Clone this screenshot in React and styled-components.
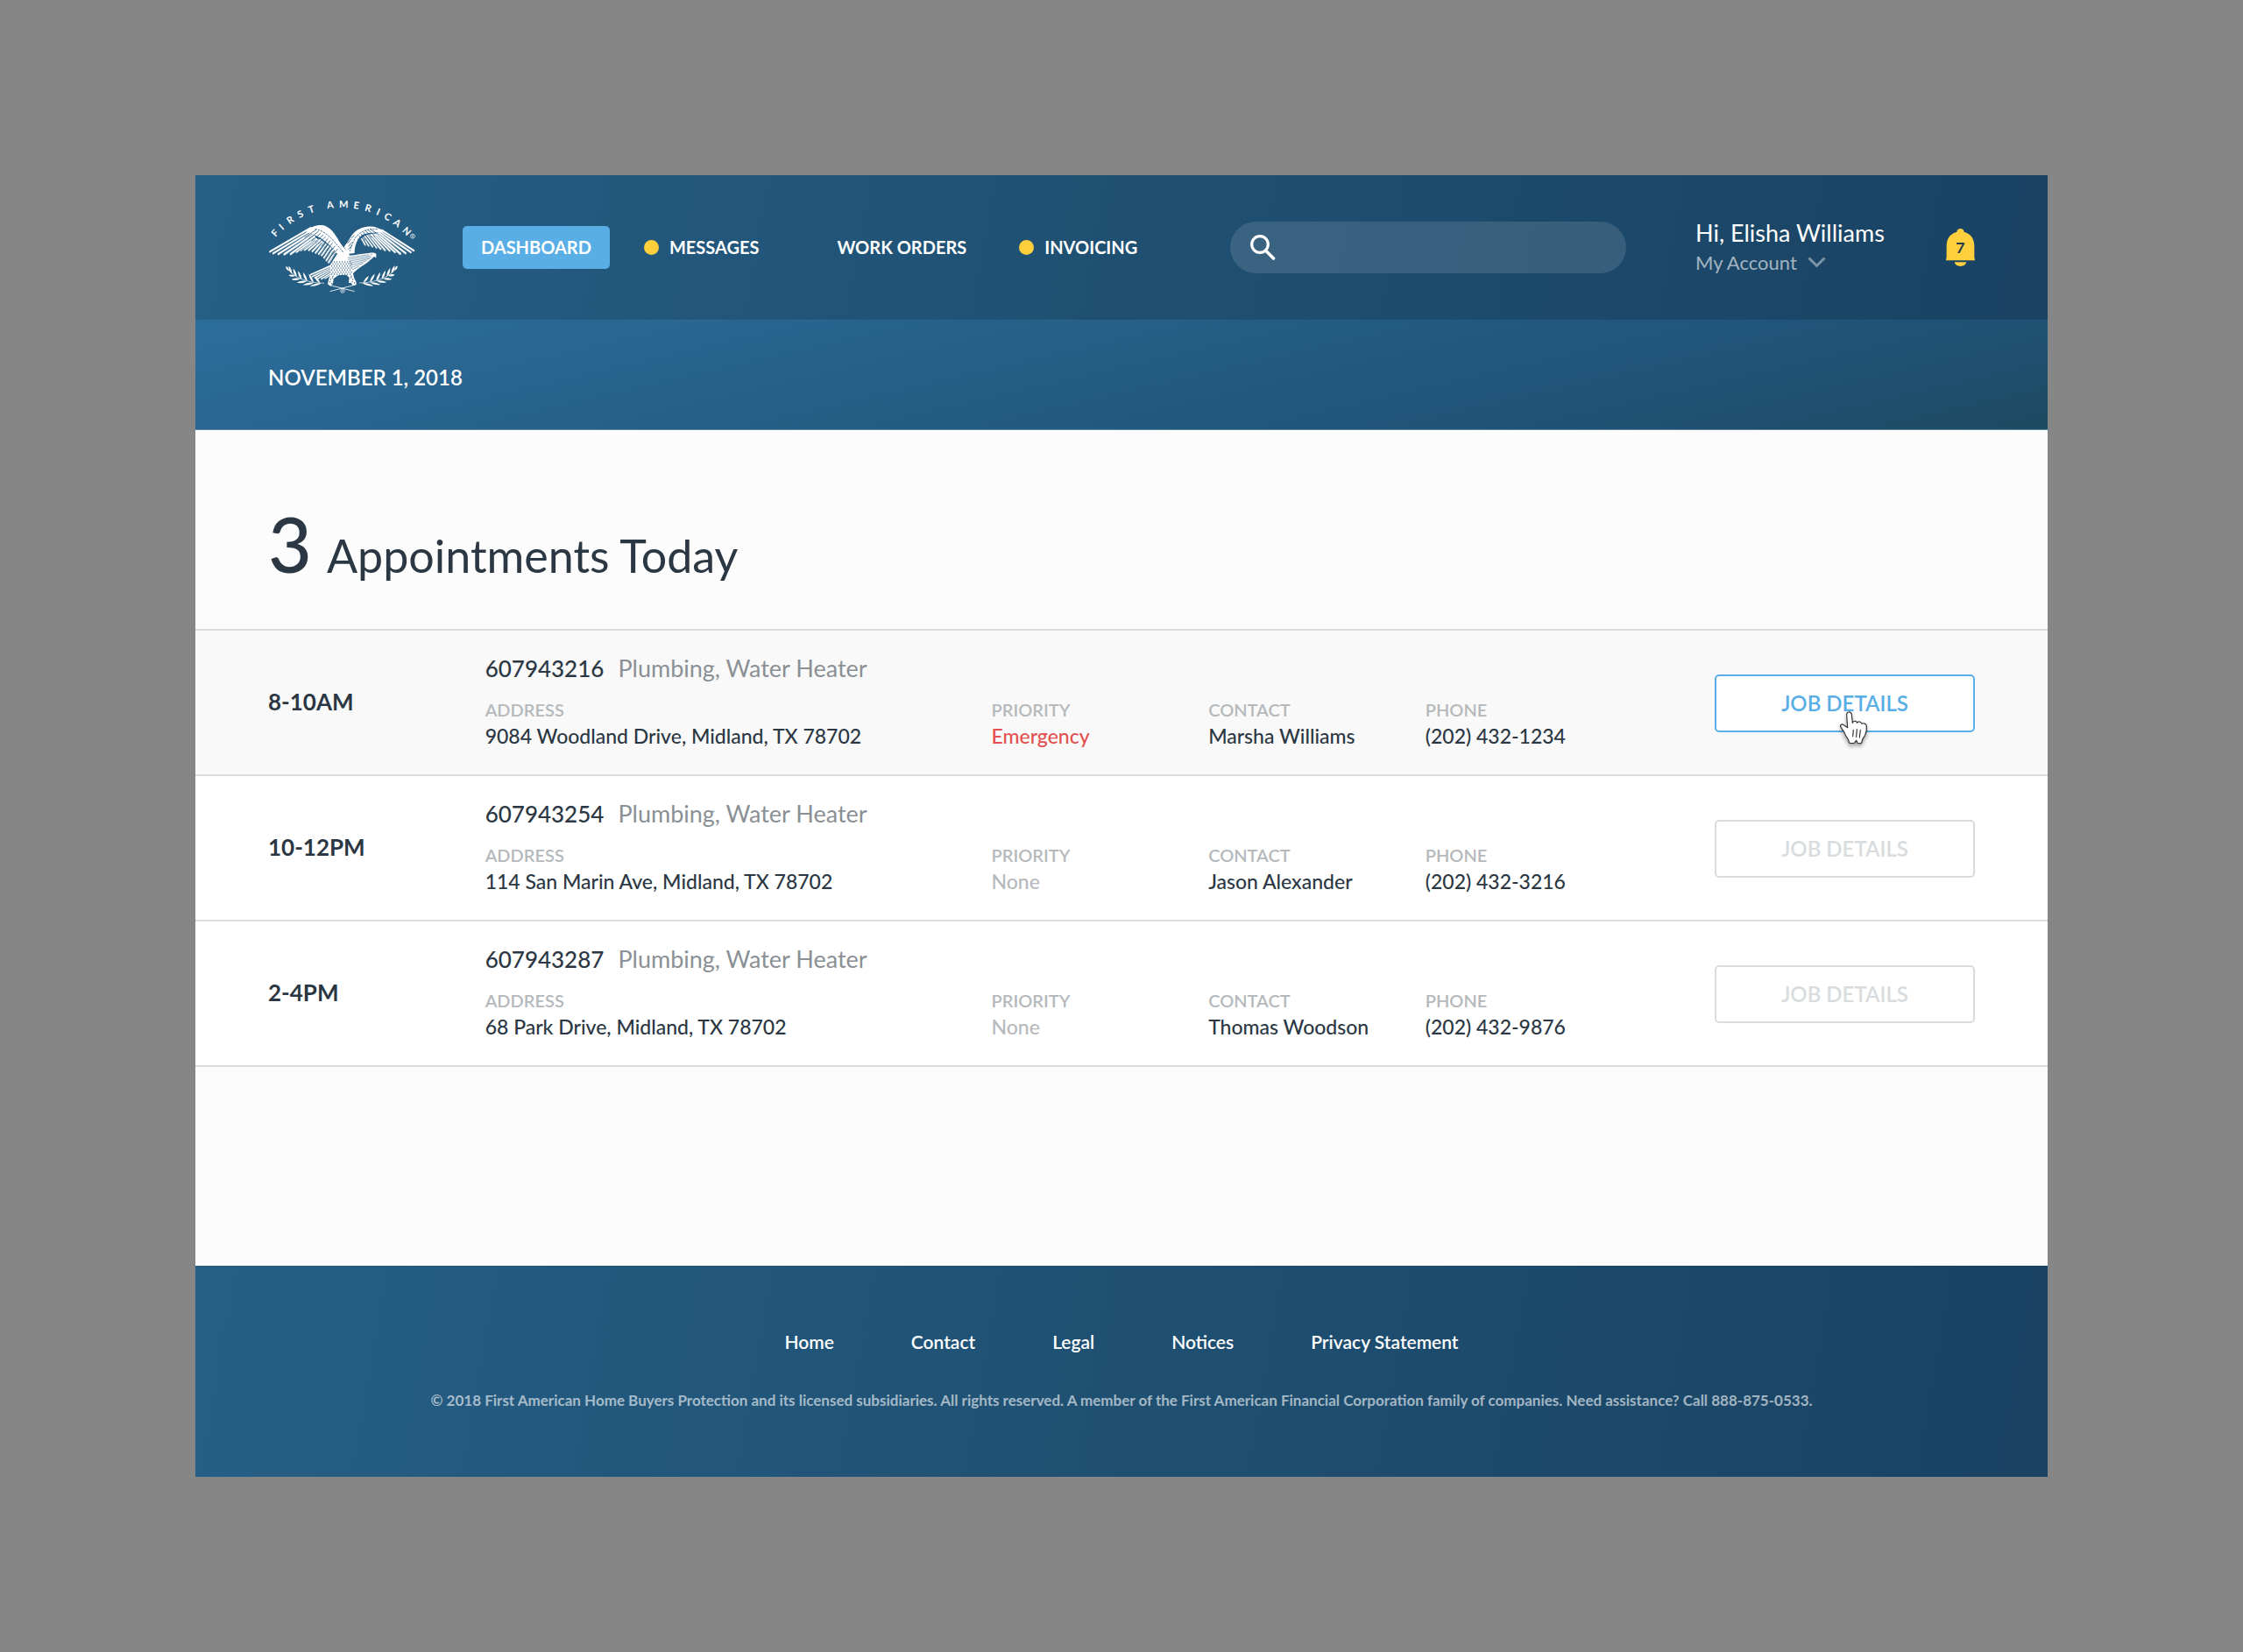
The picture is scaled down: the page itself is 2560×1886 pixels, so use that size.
import React from "react";
import styled, { createGlobalStyle } from "styled-components";

const ink = "#2b3743";
const sky = "#59aee6";
const sun = "#ffcf3c";
const line = "#dadcde";
const deepBlue = "linear-gradient(100deg, #265f86 0%, #1f5072 50%, #194263 100%)";

const GlobalStyle = createGlobalStyle`
  * { box-sizing: border-box; }
  body {
    margin: 0;
    background: #868686;
    color: ${ink};
    font-family: Lato, "Open Sans", sans-serif;
    font-size: 23px;
  }
  h1, p, ul, dl, dd { margin: 0; padding: 0; }
  ul { list-style: none; }
  a { color: inherit; text-decoration: none; }
  button, input { font: inherit; color: inherit; }
`;

const Page = styled.div`
  min-height: 100vh;
  padding: 200px 223px;
`;

const Window = styled.div`
  background: #fcfcfc;
`;

const Header = styled.header`
  display: flex;
  align-items: center;
  min-height: 165px;
  padding: 0 83px;
  background: ${deepBlue};
  color: #fff;
`;

const LogoLink = styled.a`
  display: flex;
  flex: none;
  margin-right: 54px;
`;

const LogoArt = styled.svg`
  overflow: visible;
`;

const Nav = styled.nav`
  display: flex;
  flex: 1;
  gap: 18px;
`;

const NavLink = styled.a`
  display: flex;
  align-items: center;
  gap: 12px;
  padding: 0 21px;
  border-radius: 5px;
  background: ${(p) => (p.$active ? sky : "transparent")};
  font-size: 20px;
  font-weight: 700;
  line-height: 49px;
  white-space: nowrap;
`;

const Dot = styled.span`
  width: 17px;
  height: 17px;
  border-radius: 50%;
  background: ${(p) => (p.$on ? sun : "transparent")};
`;

const Search = styled.label`
  display: flex;
  align-items: center;
  gap: 16px;
  flex: 0 1 452px;
  height: 59px;
  margin-right: 79px;
  padding: 0 23px;
  border-radius: 30px;
  background: rgba(255, 255, 255, 0.12);
`;

const SearchInput = styled.input`
  flex: 1;
  min-width: 0;
  border: 0;
  outline: 0;
  background: transparent;
`;

const Account = styled.div`
  flex: none;
  min-width: 286px;
`;

const Greeting = styled.p`
  font-size: 27px;
  line-height: 34px;
`;

const AccountButton = styled.button`
  display: flex;
  align-items: center;
  gap: 12px;
  padding: 0;
  border: 0;
  background: none;
  color: rgba(255, 255, 255, 0.6);
  font-size: 22px;
  line-height: 34px;
`;

const BellButton = styled.button`
  display: flex;
  padding: 0;
  border: 0;
  background: none;
`;

const DateBar = styled.div`
  padding: 52px 83px 45px;
  border-bottom: 1px solid #5585a6;
  background: linear-gradient(167deg, #2c6e9b 0%, #265f87 40%, #21567d 65%, #1f5071 84%, #1e4a60 100%);
  color: #fff;
  font-size: 24px;
  font-weight: 600;
  line-height: 28px;
`;

const Title = styled.h1`
  display: flex;
  align-items: baseline;
  gap: 17px;
  padding: 86px 83px 40px;
  font-size: 52px;
  font-weight: 400;
  line-height: 88px;
`;

const Count = styled.span`
  font-size: 86px;
  font-weight: 500;
`;

const Main = styled.main`
  padding-bottom: 227px;
`;

const JobList = styled.ul`
  border-top: 2px solid ${line};
`;

const JobRow = styled.li`
  display: grid;
  grid-template-columns: 3fr 17fr 297px;
  align-items: center;
  padding: 27px 83px 26px;
  border-bottom: 2px solid ${line};
  background: ${(p) => (p.$active ? "#f9f9f9" : "#fff")};
`;

const Time = styled.time`
  padding-bottom: 4px;
  font-size: 26px;
  font-weight: 700;
  line-height: 32px;
`;

const JobTitle = styled.p`
  display: flex;
  align-items: baseline;
  gap: 16px;
  margin-bottom: 19px;
  font-size: 27px;
  line-height: 32px;
`;

const JobNumber = styled.span`
  font-size: 26px;
  font-weight: 500;
`;

const JobType = styled.span`
  color: #8a9095;
`;

const Facts = styled.dl`
  display: grid;
  grid-template-columns: 7fr 3fr 3fr 4fr;
`;

const Label = styled.dt`
  color: #b5b9bc;
  font-size: 20px;
  font-weight: 600;
  line-height: 24px;
`;

const tones = { normal: ink, urgent: "#e4504f", muted: "#b5b9bc" };

const Value = styled.dd`
  color: ${(p) => tones[p.$tone || "normal"]};
  font-size: 23px;
  font-weight: 500;
  line-height: 36px;
`;

const ButtonSlot = styled.div`
  position: relative;
`;

const DetailsButton = styled.button`
  display: block;
  width: 100%;
  height: 66px;
  padding: 0;
  border: 2px solid ${(p) => (p.$active ? sky : "#d8dcde")};
  border-radius: 5px;
  background: #fff;
  color: ${(p) => (p.$active ? sky : "#d8dcde")};
  font-size: 24px;
  font-weight: 600;
`;

const Pointer = styled.svg`
  position: absolute;
  left: 142px;
  top: 41px;
  pointer-events: none;
  filter: drop-shadow(0 3px 2px rgba(0, 0, 0, 0.35));
`;

const Footer = styled.footer`
  padding: 75px 83px 75px;
  background: ${deepBlue};
  color: #fff;
  text-align: center;
`;

const FooterLinks = styled.nav`
  display: flex;
  justify-content: center;
  gap: 88px;
  margin-bottom: 43px;
  font-size: 21px;
  font-weight: 600;
  line-height: 24px;
`;

const Legal = styled.p`
  color: rgba(255, 255, 255, 0.6);
  font-size: 17px;
  font-weight: 700;
  line-height: 24px;
`;

/* Wordmark: each letter sits on a circle, turned to face outwards. */
const arc = [
  ["F", -46.8, 0.54], ["I", -41.2, 0.27], ["R", -34.3, 0.6], ["S", -26.9, 0.54], ["T", -19.5, 0.57],
  [" ", -13, 0.2],
  ["A", -7.3, 0.67], ["M", 1.1, 0.9], ["E", 9.2, 0.56], ["R", 16.7, 0.6], ["I", 23.5, 0.27],
  ["C", 30.2, 0.64], ["A", 37.2, 0.67], ["N", 45.2, 0.73],
].map(([ch, deg, w]) => {
  const a = (deg * Math.PI) / 180;
  const half = (w * 33) / 2;
  return {
    ch,
    deg,
    x: 302 + 302 * Math.sin(a) - half * Math.cos(a),
    y: 366 - 302 * Math.cos(a) - half * Math.sin(a),
  };
});

/* Feathers as [base x, base y, tip x, tip y, width]. */
const leftFeathers = [
  [196, 134, 57, 215, 6], [198, 142, 68, 221, 6], [202, 149, 86, 223, 7], [204, 157, 106, 224, 7],
  [208, 164, 128, 223, 7], [212, 170, 148, 216, 6], [216, 173, 162, 210, 6], [222, 174, 176, 209, 6],
  [228, 176, 190, 210, 6], [234, 180, 202, 214, 6], [240, 185, 213, 219, 6], [248, 191, 224, 223, 6],
  [256, 197, 234, 228, 6], [264, 203, 242, 236, 6], [272, 210, 250, 245, 6], [280, 216, 258, 252, 6],
  [290, 224, 268, 258, 6], [300, 232, 280, 262, 6],
];
const leftCoverts = [
  [214, 140, 176, 166], [222, 146, 188, 172], [230, 152, 200, 178], [238, 158, 212, 182], [246, 164, 222, 188],
  [254, 171, 232, 196], [262, 178, 242, 203], [270, 186, 250, 211], [279, 196, 259, 219], [288, 206, 268, 228],
];
const rightFeathers = [
  [440, 142, 548, 211, 6], [436, 147, 538, 217, 6], [430, 151, 520, 220, 7], [424, 154, 502, 222, 7],
  [417, 156, 484, 217, 6], [410, 156, 466, 212, 6], [403, 157, 450, 210, 6], [396, 158, 435, 206, 5],
  [389, 160, 421, 202, 5], [382, 163, 407, 198, 5], [376, 167, 394, 195, 5], [370, 172, 382, 192, 5],
];
const rightCoverts = [
  [400, 138, 428, 156], [392, 140, 416, 162], [384, 143, 404, 166], [376, 148, 392, 170], [369, 155, 382, 176],
  [363, 163, 372, 184], [358, 172, 364, 194], [354, 182, 358, 204],
];
const tail = [
  [268, 262, 196, 294], [266, 268, 202, 300], [266, 274, 211, 304], [266, 280, 221, 307], [268, 286, 233, 308], [270, 290, 246, 306],
];
const neckLines = [
  [322, 236, 396, 225], [324, 242, 402, 229], [326, 248, 404, 234], [328, 255, 398, 239], [331, 262, 388, 246], [334, 269, 376, 254], [338, 276, 362, 265],
];

/* Laurel leaves of the left branch as [x, y, angle, length]; the right branch mirrors them. */
const leaves = [
  [121, 280, -122, 18], [132, 291, -112, 30], [148, 302, -112, 32], [165, 311, -112, 33], [184, 317, -114, 34],
  [206, 321, -120, 34], [228, 323, -128, 30],
  [142, 298, 188, 22], [160, 308, 176, 30], [182, 316, 172, 34], [206, 321, 168, 38], [232, 323, 166, 40],
];

function Leaf({ x, y, angle, length }) {
  const l = length;
  return (
    <path
      d={`M0 0C${l * 0.3} -5.5 ${l * 0.7} -5 ${l} 0C${l * 0.7} 4 ${l * 0.3} 4.5 0 0Z`}
      transform={`translate(${x} ${y}) rotate(${angle})`}
    />
  );
}

function Branch() {
  return (
    <>
      <path d="M112 268C136 302 180 322 242 323" fill="none" stroke="#fff" strokeWidth="2" />
      {leaves.map(([x, y, angle, length], i) => (
        <Leaf key={i} x={x} y={y} angle={angle} length={length} />
      ))}
    </>
  );
}

const blue = "#265b80";
const speckles = [[264, 310], [270, 304], [262, 318], [268, 324], [334, 304], [340, 310], [338, 318], [346, 322]];
for (let r = 0; r < 8; r++) {
  for (let c = 0; c < 9; c++) {
    const x = 268 + c * 9 + (r % 2) * 4;
    const y = 250 + r * 7;
    if (x < 340 - (y - 250) * 0.1 && (y < 296 || x < 274 || x > 328)) speckles.push([x, y]);
  }
}

function Logo() {
  return (
    <LogoArt width="168" height="108" viewBox="50 40 504 324" fill="#fff" role="img" aria-label="First American">
      <text
        x={arc.map((g) => g.x).join(" ")}
        y={arc.map((g) => g.y).join(" ")}
        rotate={arc.map((g) => g.deg).join(" ")}
        fontSize="33"
        fontWeight="700"
      >
        FIRST AMERICAN
      </text>
      <g fill="none" stroke="#fff" strokeWidth="2">
        <circle cx="545" cy="162" r="7.5" />
        <path d="M543 167V158h3a2 2 0 0 1 0 5h-3M545.500 163l3 4" strokeWidth="1.500" />
        <circle cx="305" cy="349" r="7" />
        <path d="M303 353V345h3a2 2 0 0 1 0 4h-3M305.500 349l3 4" strokeWidth="1.500" />
        <path d="M262 351L346 329M259 329L346 351" strokeWidth="2.500" />
      </g>

      <g stroke="#fff" strokeLinecap="round">
        {[...leftFeathers, ...rightFeathers].map(([x1, y1, x2, y2, w], i) => (
          <line key={i} x1={x1} y1={y1} x2={x2} y2={y2} strokeWidth={w + 1} />
        ))}
      </g>
      <g stroke={blue} strokeWidth="1.600">
        {[...leftFeathers, ...rightFeathers].map(([x1, y1, x2, y2], i) => (
          <line key={i} x1={x1} y1={y1 + 4} x2={x2} y2={y2 + 4} />
        ))}
      </g>

      <path d="M180 146C196 130 214 123 234 124C258 127 274 146 288 170C300 192 312 206 326 216L332 244L300 240C282 214 256 184 226 166C206 156 190 152 180 146Z" />
      <path d="M448 146C430 132 410 127 390 129C364 132 344 144 332 166C324 180 314 192 310 200L328 222L346 220C346 196 354 172 372 158C392 148 424 152 448 146Z" />
      <g stroke={blue} strokeWidth="2.400" fill="none" strokeLinecap="round">
        {[...leftCoverts, ...rightCoverts].map(([x1, y1, x2, y2], i) => (
          <line key={i} x1={x1} y1={y1} x2={x2} y2={y2} />
        ))}
        <path d="M212 138C246 142 274 176 306 216" strokeDasharray="5 5" />
        <path d="M424 138C386 134 356 150 344 176C338 190 334 200 330 212" strokeDasharray="5 5" />
        <path d="M334 172l-12 14M338 182l-12 14M336 194l-10 12M344 160l-8 8" />
      </g>

      <g stroke="#fff" strokeWidth="6" strokeLinecap="round">
        {tail.map(([x1, y1, x2, y2], i) => (
          <line key={i} x1={x1} y1={y1} x2={x2} y2={y2} />
        ))}
      </g>
      <g stroke={blue} strokeWidth="1.800">
        {tail.map(([x1, y1, x2, y2], i) => (
          <line key={i} x1={x1} y1={y1 + 4} x2={x2} y2={y2 + 4} />
        ))}
      </g>

      <path d="M300 222C320 232 340 228 362 224L398 219C408 217 416 219 420 222L420 236L413 232C400 244 384 258 366 268C354 276 346 284 341 290L344 304L352 320L352 329L340 331L334 322L326 322L328 304L318 294L290 296L274 308L272 324L264 333L254 326L258 308L266 290L262 264C270 246 284 230 300 222Z" />
      <g stroke={blue} strokeWidth="1.600">
        {neckLines.map(([x1, y1, x2, y2], i) => (
          <line key={i} x1={x1} y1={y1} x2={x2} y2={y2} />
        ))}
      </g>
      <g fill={blue}>
        {speckles.map(([x, y], i) => (
          <ellipse key={i} cx={x} cy={y} rx="2" ry="2.300" />
        ))}
        <circle cx="404" cy="224" r="1.800" />
      </g>

      <Branch />
      <g transform="matrix(-1 0 0 1 604 -1)">
        <Branch />
      </g>
    </LogoArt>
  );
}

function SearchIcon() {
  return (
    <svg width="29" height="29" viewBox="0 0 29 29" fill="none" stroke="#fff" aria-hidden="true">
      <circle cx="11" cy="11" r="9.300" strokeWidth="3.200" />
      <path d="M19 19.500L26.500 27" strokeWidth="3.600" strokeLinecap="round" />
    </svg>
  );
}

function Chevron() {
  return (
    <svg width="21" height="13" viewBox="0 0 21 13" fill="none" stroke="currentColor" strokeWidth="3" opacity="0.700" aria-hidden="true">
      <path d="M1.500 1.500L10.500 10.500L19.500 1.500" />
    </svg>
  );
}

function Bell() {
  return (
    <svg width="33" height="43" viewBox="0 0 99 129" fill={sun} aria-hidden="true">
      <path d="M49.500 0C56 0 61 4 62 11C84 17 97 34 97 58V96C97 102 99 103 99 109H0C0 103 2 102 2 96V58C2 34 15 17 37 11C38 4 43 0 49.500 0Z" />
      <path d="M29 115H70C68 124 60 129 49.500 129C39 129 31 124 29 115Z" />
      <text x="49" y="85" textAnchor="middle" fontSize="53" fontWeight="700" fill="#23394b">7</text>
    </svg>
  );
}

function HandPointer() {
  return (
    <Pointer width="33" height="39" viewBox="-3 -3 99 117" fill="#fff" stroke="#333" strokeWidth="3.500" strokeLinejoin="round" strokeLinecap="round" aria-hidden="true">
      <path d="M26 56L23 12C22 0 38 0 40 11L43 40C45 32 56 31 59 40C62 33 73 35 75 43C80 39 90 43 91 50C92 62 91 72 86 82C79 91 75 98 74 108C70 111 62 111 60 108L56 100L51 107C46 110 36 110 31 107C32 98 24 92 20 84C16 73 10 64 4 56C-3 47 6 42 13 47C18 50 22 53 26 56Z" />
      <path d="M46 64L44 86M58 62L56 88M70 64L67 90" />
    </Pointer>
  );
}

const navItems = [
  { label: "DASHBOARD", active: true },
  { label: "MESSAGES", unread: true },
  { label: "WORK ORDERS" },
  { label: "INVOICING", unread: true },
];

const jobs = [
  { time: "8-10AM", number: "607943216", address: "9084 Woodland Drive, Midland, TX 78702", priority: "Emergency", tone: "urgent", contact: "Marsha Williams", phone: "(202) 432-1234", active: true },
  { time: "10-12PM", number: "607943254", address: "114 San Marin Ave, Midland, TX 78702", priority: "None", tone: "muted", contact: "Jason Alexander", phone: "(202) 432-3216" },
  { time: "2-4PM", number: "607943287", address: "68 Park Drive, Midland, TX 78702", priority: "None", tone: "muted", contact: "Thomas Woodson", phone: "(202) 432-9876" },
];

const footerLinks = ["Home", "Contact", "Legal", "Notices", "Privacy Statement"];

function Fact({ label, tone, children }) {
  return (
    <div>
      <Label>{label}</Label>
      <Value $tone={tone}>{children}</Value>
    </div>
  );
}

function Job({ job }) {
  return (
    <JobRow $active={job.active}>
      <Time>{job.time}</Time>
      <div>
        <JobTitle>
          <JobNumber>{job.number}</JobNumber>
          <JobType>Plumbing, Water Heater</JobType>
        </JobTitle>
        <Facts>
          <Fact label="ADDRESS">{job.address}</Fact>
          <Fact label="PRIORITY" tone={job.tone}>{job.priority}</Fact>
          <Fact label="CONTACT">{job.contact}</Fact>
          <Fact label="PHONE">{job.phone}</Fact>
        </Facts>
      </div>
      <ButtonSlot>
        <DetailsButton type="button" $active={job.active}>JOB DETAILS</DetailsButton>
        {job.active && <HandPointer />}
      </ButtonSlot>
    </JobRow>
  );
}

export default function App() {
  return (
    <>
      <GlobalStyle />
      <Page>
        <Window>
          <Header>
            <LogoLink href="#home"><Logo /></LogoLink>
            <Nav aria-label="Main">
              {navItems.map((item) => (
                <NavLink key={item.label} href="#" $active={item.active}>
                  {!item.active && <Dot $on={item.unread} />}
                  {item.label}
                </NavLink>
              ))}
            </Nav>
            <Search>
              <SearchIcon />
              <SearchInput type="search" aria-label="Search" />
            </Search>
            <Account>
              <Greeting>Hi, Elisha Williams</Greeting>
              <AccountButton type="button">My Account <Chevron /></AccountButton>
            </Account>
            <BellButton type="button" aria-label="Notifications"><Bell /></BellButton>
          </Header>
          <DateBar>NOVEMBER 1, 2018</DateBar>
          <Main>
            <Title><Count>3</Count> Appointments Today</Title>
            <JobList>
              {jobs.map((job) => <Job key={job.number} job={job} />)}
            </JobList>
          </Main>
          <Footer>
            <FooterLinks aria-label="Footer">
              {footerLinks.map((label) => <a key={label} href="#">{label}</a>)}
            </FooterLinks>
            <Legal>
              © 2018 First American Home Buyers Protection and its licensed subsidiaries. All rights reserved. A member of
              the First American Financial Corporation family of companies. Need assistance? Call 888-875-0533.
            </Legal>
          </Footer>
        </Window>
      </Page>
    </>
  );
}
